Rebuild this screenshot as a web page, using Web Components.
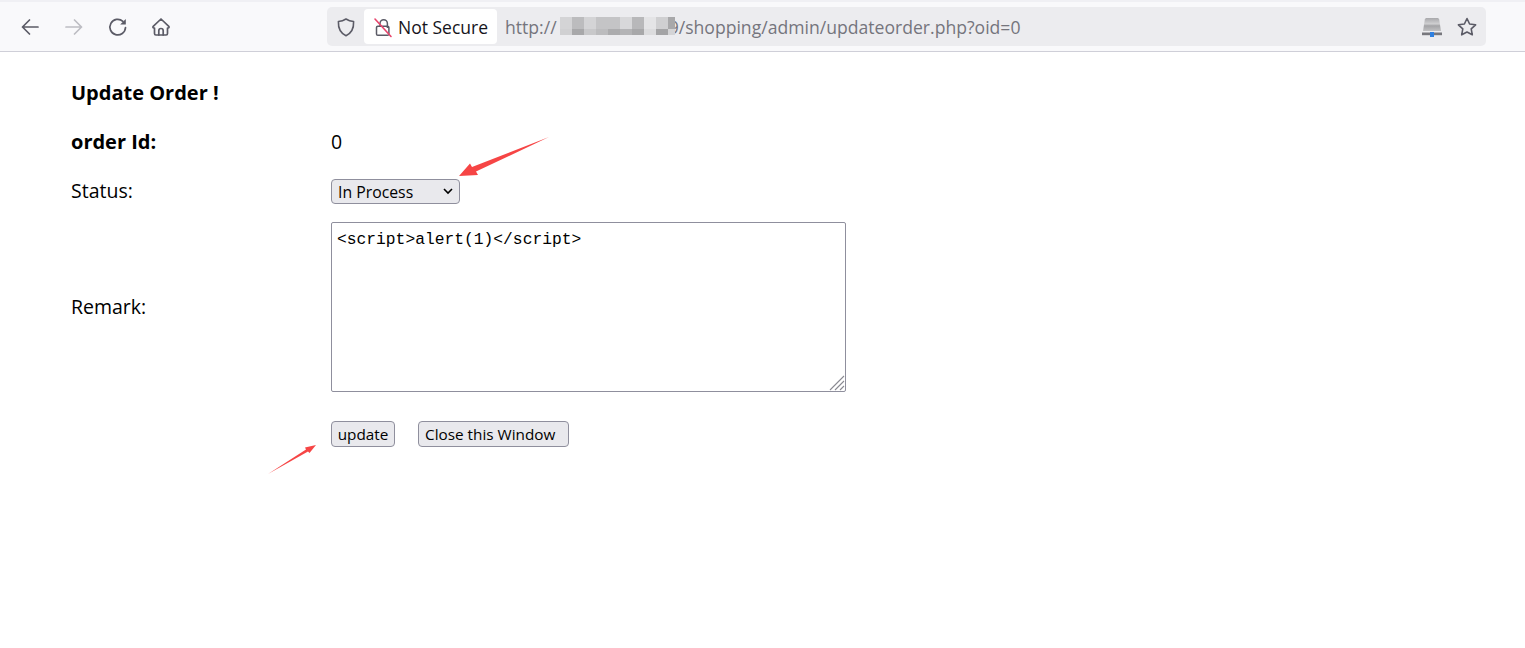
<!DOCTYPE html>
<html>
<head>
<meta charset="utf-8">
<title>Update Order</title>
<style>
  html, body { margin: 0; background: #fff; }
  body { font-family: "Open Sans", "Noto Sans", sans-serif; position: relative; height: 648px; overflow: hidden; }
</style>
</head>
<body>
<browser-bar url-tail="9/shopping/admin/updateorder.php?oid=0">Not Secure</browser-bar>
<order-form></order-form>
<red-arrows></red-arrows>

<script>
class BrowserBar extends HTMLElement {
  constructor() {
    super().attachShadow({ mode: "open" }).innerHTML = `
    <style>
      :host {
        display: flex;
        align-items: center;
        height: 49px;
        border-top: 2px solid #f0f0f4;
        border-bottom: 1px solid #cfcfd8;
        background: #f9f9fb;
      }
      .nav { display: flex; gap: 22px; padding-left: 19px; width: 327px; box-sizing: border-box; flex: none; }
      .nav svg { width: 22px; height: 22px; display: block; fill: none; stroke: #5b5b66; stroke-width: 1.7; stroke-linecap: round; stroke-linejoin: round; }
      .nav svg.off { stroke: #bdbdc3; }
      .urlbar {
        display: flex;
        align-items: center;
        width: 1159px;
        height: 39px;
        background: #ececef;
        border-radius: 5px;
      }
      .shield { width: 22px; height: 22px; margin-left: 8px; flex: none; fill: none; stroke: #5b5b66; stroke-width: 1.6; stroke-linejoin: round; }
      .secure {
        display: flex;
        align-items: center;
        height: 35px;
        width: 133px;
        flex: none;
        margin-left: 7px;
        background: #fff;
        border-radius: 4px;
        font-size: 17.5px;
        color: #15141a;
        white-space: nowrap;
      }
      .secure svg { width: 20px; height: 22px; margin: 0 5px 0 9px; flex: none; }
      .url { display: flex; align-items: center; margin-left: 8px; font-size: 17.6px; color: #75757d; white-space: nowrap; flex: 1; }
      .blur {
        display: grid;
        grid-template-columns: repeat(9, 12px) 7px;
        grid-template-rows: 12px 6px;
        margin: -1px -6px 0 3px;
        position: relative;
      }
      .blur i { display: block; }
      .tools { display: flex; align-items: center; gap: 13px; padding-right: 8px; }
      .tools svg { display: block; }
    </style>
    <div class="nav">
      <svg viewBox="0 0 22 22"><path d="M19 11H3.500M10.500 4l-7 7 7 7"/></svg>
      <svg viewBox="0 0 22 22" class="off"><path d="M3 11h15.500M11.500 4l7 7-7 7"/></svg>
      <svg viewBox="0 0 22 22"><path d="M18.500 11.500a7.800 7.800 0 1 1-2.600-6.200"/><path d="M18.800 3v5.600h-5.600z" fill="#5b5b66" stroke="none"/></svg>
      <svg viewBox="0 0 22 22" style="margin-left:-1px"><path d="M11 3 3.200 10.400c-.6.600-.2 1.600.6 1.600h.7v5.600c0 .8.600 1.400 1.400 1.400h10.200c.8 0 1.400-.6 1.400-1.400V12h.7c.8 0 1.200-1 .6-1.600z"/><path d="M8.800 19v-4.300a2.200 2.200 0 0 1 4.400 0V19"/></svg>
    </div>
    <div class="urlbar">
      <svg class="shield" viewBox="0 0 22 22"><path d="M11 3c2.400 1.600 4.800 2.300 7.600 2.500.3 6.600-1.600 11.400-7.600 14.200C5 16.900 3.100 12.100 3.400 5.500 6.200 5.300 8.600 4.600 11 3z"/></svg>
      <div class="secure">
        <svg viewBox="0 0 20 22" fill="none">
          <path d="M7 10V7.500a3.700 3.700 0 0 1 7.400 0V12M3.500 11.500V18c0 .8.600 1.300 1.300 1.300H14.500c.8 0 1.400-.5 1.400-1.300v-6.500c0-.7-.6-1.200-1.400-1.200H4.800c-.7 0-1.300.5-1.300 1.200z" stroke="#5b5b66" stroke-width="1.500"/>
          <path d="M2 3 18 20.500" stroke="#e8446c" stroke-width="1.600" stroke-linecap="round"/>
        </svg>
        <span><slot></slot></span>
      </div>
      <div class="url">
        <span>http://</span>
        <span class="blur" id="blur"></span>
        <span id="tail"></span>
      </div>
      <div class="tools">
        <svg width="22" height="20" viewBox="0 0 22 20">
          <defs><linearGradient id="hdd" x1="0" y1="0" x2="0" y2="1"><stop offset="0" stop-color="#a8a8ab"/><stop offset=".45" stop-color="#cfcfd1"/><stop offset=".6" stop-color="#a4a4a7"/><stop offset="1" stop-color="#c0c0c2"/></linearGradient></defs>
          <path d="M2 14 3.800 2.500C4 1.500 4.800 1 5.800 1h10.400c1 0 1.800.5 2 1.500L20 14z" fill="url(#hdd)"/>
          <path d="M1 15.500h20v2.700H1z" fill="#77777d"/>
          <path d="M9 15h4v5H9z" fill="#2f80e0"/>
        </svg>
        <svg width="22" height="22" viewBox="0 0 22 22" fill="none"><path d="m11 2.500 2.600 5.500 6 .8-4.400 4.100 1.100 5.900L11 16l-5.300 2.800 1.100-5.900L2.400 8.800l6-.8z" stroke="#5b5b66" stroke-width="1.600" stroke-linejoin="round"/></svg>
      </div>
    </div>
    `;
  }
  connectedCallback() {
    const { shadowRoot } = this;
    shadowRoot.querySelector("#tail").textContent = this.getAttribute("url-tail");
    // pixelated block over the host name
    const cells = ["#d4d4d6", "#bcbcbe", "#d4d4d6", "#c4c4c6", "#c4c4c6", "#d8d8da", "#b8b8ba", "#e4e4e6", "#cfcfd1", "#a8a8aa",
                   "#d0d0d2", "#a8a8aa", "#c8c8ca", "#bcbcbe", "#acacae", "#b4b4b6", "#a8a8aa", "#dcdcde", "#a4a4a6", "#d4d4d6"];
    shadowRoot.querySelector("#blur").innerHTML = cells.map((c) => `<i style="background:${c}"></i>`).join("");
  }
}
customElements.define("browser-bar", BrowserBar);

class FormRow extends HTMLElement {
  constructor() {
    super().attachShadow({ mode: "open" }).innerHTML = `
    <style>
      :host {
        display: grid;
        grid-template-columns: 260px auto;
        justify-content: start;
        align-items: center;
        min-height: 34px;
      }
    </style>
    <slot name="label"><span></span></slot>
    <slot></slot>
    `;
  }
}
customElements.define("form-row", FormRow);

class OrderForm extends HTMLElement {
  constructor() {
    super().attachShadow({ mode: "open" }).innerHTML = `
    <style>
      :host {
        display: flex;
        flex-direction: column;
        gap: 15px;
        padding: 23px 0 0 71px;
        font-size: 19.5px;
        color: #000;
      }
      b { font-size: 20px; font-weight: 700; }
      .select { position: relative; width: 129px; margin-top: 3px; }
      select {
        appearance: none;
        display: block;
        width: 129px;
        height: 25px;
        padding: 1px 0 0 6px;
        font: 15.8px "Open Sans", sans-serif;
        color: #000;
        border: 1px solid #8f8f9d;
        border-radius: 4px;
        background: #e9e9ed;
      }
      .select svg { position: absolute; right: 7px; top: 9px; }
      .remark { margin-bottom: 2px; }
      .area { position: relative; width: 515px; height: 170px; }
      textarea {
        display: block;
        width: 515px;
        height: 170px;
        box-sizing: border-box;
        padding: 7px 5px 5px;
        resize: none;
        font: 16.3px "Liberation Mono", monospace;
        color: #000;
        border: 1px solid #8f8f9d;
        border-radius: 2px;
        background: #fff;
      }
      .grip { position: absolute; right: 1px; bottom: 1px; }
      .last { margin-top: 10px; }
      .buttons { display: flex; gap: 23px; }
      button {
        height: 26px;
        padding: 0;
        font: 15.3px "Open Sans", sans-serif;
        color: #000;
        border: 1px solid #8f8f9d;
        border-radius: 4px;
        background: #e9e9ed;
      }
      .update { width: 64px; }
      .wide { width: 151px; text-align: left; padding-left: 6px; }
    </style>
    <form-row><b slot="label">Update Order !</b></form-row>
    <form-row><b slot="label">order Id:</b><span>0</span></form-row>
    <form-row>
      <span slot="label">Status:</span>
      <div class="select">
        <select><option>In Process</option></select>
        <svg width="10" height="7" viewBox="0 0 10 7" fill="none"><path d="m1 1 4 4 4-4" stroke="#000" stroke-width="1.600"/></svg>
      </div>
    </form-row>
    <form-row>
      <span slot="label" class="remark">Remark:</span>
      <div class="area">
        <textarea>&lt;script&gt;alert(1)&lt;/script&gt;</textarea>
        <svg class="grip" width="16" height="16" viewBox="0 0 16 16" fill="none" stroke="#8a8a92" stroke-width="1.100"><path d="M1 15 15 1M6 15 15 6M11 15l4-4"/></svg>
      </div>
    </form-row>
    <form-row class="last">
      <span slot="label"></span>
      <div class="buttons">
        <button class="update">update</button>
        <button class="wide">Close this Window</button>
      </div>
    </form-row>
    `;
  }
}
customElements.define("order-form", OrderForm);

// the two red marks drawn on the screenshot
class RedArrows extends HTMLElement {
  constructor() {
    super().attachShadow({ mode: "open" }).innerHTML = `
    <style>
      :host { position: absolute; inset: 0; pointer-events: none; }
      svg { position: absolute; left: 0; top: 0; }
    </style>
    <svg width="1525" height="648" viewBox="0 0 1525 648">
      <path d="M549 137 476 171.500 478 175 459 176 470 163.500 472 167z" fill="#f64545"/>
      <path d="M268 474 306 449.500 305 447.500 316 445 309.500 453 308 451.500z" fill="#f64545"/>
    </svg>
    `;
  }
}
customElements.define("red-arrows", RedArrows);
</script>
</body>
</html>
